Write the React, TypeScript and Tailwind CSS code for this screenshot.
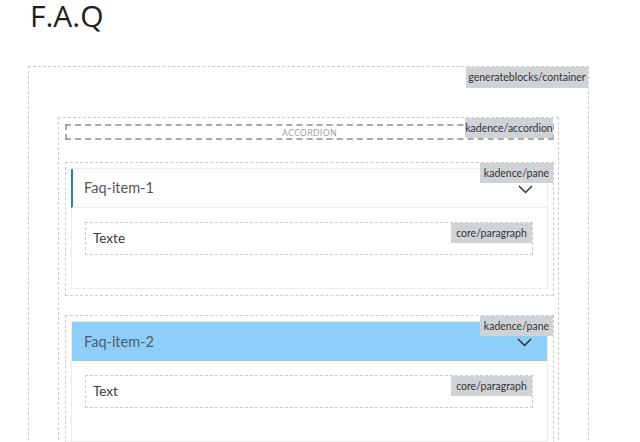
import React from "react";

function Tag({ children, className = "" }: { children: React.ReactNode; className?: string }) {
  return (
    <div
      className={`absolute top-0 right-0 bg-[#cfd3d6] text-[#333] text-[10.5px] leading-none flex items-center justify-center whitespace-nowrap ${className}`}
      style={{ fontFamily: 'Lato, "Open Sans", sans-serif' }}
    >
      {children}
    </div>
  );
}

function Chevron() {
  return (
    <svg width="15" height="9" viewBox="0 0 15 9" fill="none" className="text-[#333]">
      <path d="M1 1l6.5 6.5L14 1" stroke="currentColor" strokeWidth="1.5" />
    </svg>
  );
}

const bodyFont = { fontFamily: 'Lato, "Open Sans", sans-serif' };

function Pane({ title, text, active }: { title: string; text: string; active: boolean }) {
  return (
    <div className="relative border border-dashed border-[#cccccc] p-[5px] pb-[6px]">
      <Tag className="w-[73px] h-[20px] z-10">kadence/pane</Tag>
      <div className="border border-[#ececec] bg-white">
        {active ? (
          <div className="-ml-px h-[38px] border-l-2 border-[#1f8a99] pl-[11px] pr-[14px] flex items-center justify-between border-b border-b-[#ececec] box-content">
            <span className="text-[14.5px] text-[#555]" style={bodyFont}>{title}</span>
            <div className="mt-[2px]">
              <Chevron />
            </div>
          </div>
        ) : (
          <div className="h-[39px] bg-[#8ecef9] pl-[12px] pr-[15px] flex items-center justify-between">
            <span className="text-[14.5px] text-[#4b5d6b]" style={bodyFont}>{title}</span>
            <div className="mt-[2px]">
              <Chevron />
            </div>
          </div>
        )}
        <div className="pt-[14px] pb-[33px] pl-[13px] pr-[14px]">
          <div className="relative h-[33px] border border-dashed border-[#cccccc] pl-[7px] flex items-center">
            <Tag className="w-[81px] h-[20px]">core/paragraph</Tag>
            <span className="text-[13.5px] text-[#3a3a3a]" style={bodyFont}>{text}</span>
          </div>
        </div>
      </div>
    </div>
  );
}

export default function App() {
  return (
    <div
      className="w-[640px] h-[442px] overflow-hidden bg-white"
      style={{ fontFamily: '"Open Sans", sans-serif' }}
    >
      <h1 className="ml-[30px] text-[30px] leading-[31px] text-[#1e1e1e] font-normal">F.A.Q</h1>
      <div className="relative ml-[28px] mt-[35px] w-[561px] h-[500px] border border-dashed border-[#cccccc] pt-[50px] pl-[29px]">
        <Tag className="w-[122px] h-[21px]">generateblocks/container</Tag>
        <div className="relative w-[501px] border border-dashed border-[#cccccc] pt-[6px] pl-[6px] pr-[4px] pb-[20px]">
          <Tag className="w-[88px] h-[20px] right-[5px] top-0 z-10">kadence/accordion</Tag>
          <div className="h-[16px] border-2 border-dashed border-[#aaaaaa] flex items-center justify-center">
            <span className="text-[9px] tracking-[0.3px] text-[#999] leading-none">ACCORDION</span>
          </div>
          <div className="mt-[22px] flex flex-col gap-[19px]">
            <Pane title="Faq-item-1" text="Texte" active />
            <Pane title="Faq-item-2" text="Text" active={false} />
          </div>
        </div>
      </div>
    </div>
  );
}
